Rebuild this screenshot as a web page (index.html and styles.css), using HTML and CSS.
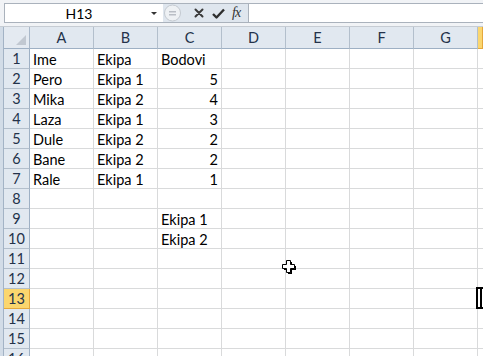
FILE: index.html
```html
<!DOCTYPE html>
<html>
<head>
<meta charset="utf-8">
<link rel="stylesheet" href="styles.css">
</head>
<body>
<div class="app">
  <div class="fbar">
    <div class="namebox"><span class="nb-text">H13</span><span class="nb-arrow"></span></div>
    <div class="fb-buttons">
      <svg class="grip" width="17" height="20" viewBox="0 0 17 20">
        <circle cx="8.5" cy="10" r="8" fill="#eef1f4" stroke="#c3c9d0"/>
        <rect x="5" y="8" width="7" height="1.5" fill="#b9bec5"/>
        <rect x="5" y="11" width="7" height="1.5" fill="#b9bec5"/>
      </svg>
      <svg class="ico ico-x" width="10" height="10" viewBox="0 0 10 10">
        <path d="M1.5 1.5 L8.5 8.5 M8.5 1.5 L1.5 8.5" stroke="#3a3a3a" stroke-width="2" stroke-linecap="round"/>
      </svg>
      <svg class="ico ico-check" width="13" height="11" viewBox="0 0 13 11">
        <path d="M1 6 L4.5 9.5 L12 1.5" fill="none" stroke="#2e2e2e" stroke-width="2.4" stroke-linejoin="round"/>
      </svg>
      <span class="fx">fx</span>
    </div>
    <div class="finput"></div>
  </div>

  <div class="sheet">
    <div class="row hdr">
      <div class="corner"><svg width="12" height="12" viewBox="0 0 12 12"><path d="M11 1 L11 11 L1 11 Z" fill="#c1c8d1"/></svg></div>
      <div class="ch">A</div><div class="ch">B</div><div class="ch">C</div><div class="ch">D</div><div class="ch">E</div><div class="ch">F</div><div class="ch">G</div><div class="ch sel"><span class="ch-wide">H</span></div>
    </div>
    <div class="row"><div class="rh">1</div><div class="cell">Ime</div><div class="cell">Ekipa</div><div class="cell">Bodovi</div><div class="cell"></div><div class="cell"></div><div class="cell"></div><div class="cell"></div><div class="cell"></div></div>
    <div class="row"><div class="rh">2</div><div class="cell">Pero</div><div class="cell">Ekipa 1</div><div class="cell num">5</div><div class="cell"></div><div class="cell"></div><div class="cell"></div><div class="cell"></div><div class="cell"></div></div>
    <div class="row"><div class="rh">3</div><div class="cell">Mika</div><div class="cell">Ekipa 2</div><div class="cell num">4</div><div class="cell"></div><div class="cell"></div><div class="cell"></div><div class="cell"></div><div class="cell"></div></div>
    <div class="row"><div class="rh">4</div><div class="cell">Laza</div><div class="cell">Ekipa 1</div><div class="cell num">3</div><div class="cell"></div><div class="cell"></div><div class="cell"></div><div class="cell"></div><div class="cell"></div></div>
    <div class="row"><div class="rh">5</div><div class="cell">Dule</div><div class="cell">Ekipa 2</div><div class="cell num">2</div><div class="cell"></div><div class="cell"></div><div class="cell"></div><div class="cell"></div><div class="cell"></div></div>
    <div class="row"><div class="rh">6</div><div class="cell">Bane</div><div class="cell">Ekipa 2</div><div class="cell num">2</div><div class="cell"></div><div class="cell"></div><div class="cell"></div><div class="cell"></div><div class="cell"></div></div>
    <div class="row"><div class="rh">7</div><div class="cell">Rale</div><div class="cell">Ekipa 1</div><div class="cell num">1</div><div class="cell"></div><div class="cell"></div><div class="cell"></div><div class="cell"></div><div class="cell"></div></div>
    <div class="row"><div class="rh">8</div><div class="cell"></div><div class="cell"></div><div class="cell"></div><div class="cell"></div><div class="cell"></div><div class="cell"></div><div class="cell"></div><div class="cell"></div></div>
    <div class="row"><div class="rh">9</div><div class="cell"></div><div class="cell"></div><div class="cell">Ekipa 1</div><div class="cell"></div><div class="cell"></div><div class="cell"></div><div class="cell"></div><div class="cell"></div></div>
    <div class="row"><div class="rh">10</div><div class="cell"></div><div class="cell"></div><div class="cell">Ekipa 2</div><div class="cell"></div><div class="cell"></div><div class="cell"></div><div class="cell"></div><div class="cell"></div></div>
    <div class="row"><div class="rh">11</div><div class="cell"></div><div class="cell"></div><div class="cell"></div><div class="cell"></div><div class="cell"></div><div class="cell"></div><div class="cell"></div><div class="cell"></div></div>
    <div class="row"><div class="rh">12</div><div class="cell"></div><div class="cell"></div><div class="cell"></div><div class="cell"></div><div class="cell"></div><div class="cell"></div><div class="cell"></div><div class="cell"></div></div>
    <div class="row"><div class="rh sel">13</div><div class="cell"></div><div class="cell"></div><div class="cell"></div><div class="cell"></div><div class="cell"></div><div class="cell"></div><div class="cell"></div><div class="cell"></div></div>
    <div class="row"><div class="rh">14</div><div class="cell"></div><div class="cell"></div><div class="cell"></div><div class="cell"></div><div class="cell"></div><div class="cell"></div><div class="cell"></div><div class="cell"></div></div>
    <div class="row"><div class="rh">15</div><div class="cell"></div><div class="cell"></div><div class="cell"></div><div class="cell"></div><div class="cell"></div><div class="cell"></div><div class="cell"></div><div class="cell"></div></div>
    <div class="row"><div class="rh">16</div><div class="cell"></div><div class="cell"></div><div class="cell"></div><div class="cell"></div><div class="cell"></div><div class="cell"></div><div class="cell"></div><div class="cell"></div></div>
  </div>

  <div class="selection"><div class="sel-inner"></div></div>

  <svg class="cursor" width="16" height="16" viewBox="0 0 16 16">
    <path d="M6 2 H10 V6 H14 V10 H10 V14 H6 V10 H2 V6 H6 Z" fill="#000" transform="translate(1 1)"/>
    <path d="M5.5 1.5 H9.5 V5.5 H13.5 V9.5 H9.5 V13.5 H5.5 V9.5 H1.5 V5.5 H5.5 Z" fill="#fff" stroke="#000" stroke-width="1"/>
  </svg>
</div>
</body>
</html>
```

FILE: styles.css
```css
html, body {
  margin: 0;
  padding: 0;
}
body {
  width: 483px;
  height: 356px;
  overflow: hidden;
  background: #fff;
  font-family: Lato, "Liberation Sans", sans-serif;
  color: #000;
}
.app {
  position: relative;
  width: 483px;
  height: 356px;
  overflow: hidden;
}

/* formula bar */
.fbar {
  display: flex;
  align-items: flex-start;
  height: 27px;
  box-sizing: border-box;
  padding: 3px 0 0 4px;
  background: #f1f3f6;
  border-bottom: 1px solid #c6ccd3;
}
.namebox {
  width: 159px;
  height: 20px;
  box-sizing: border-box;
  border: 1px solid #aab2bc;
  border-right: none;
  background: #fff;
  display: flex;
  align-items: center;
}
.nb-text {
  flex: 1;
  text-align: center;
  font-size: 14px;
  padding-left: 2px;
}
.nb-arrow {
  width: 0;
  height: 0;
  border-left: 3px solid transparent;
  border-right: 3px solid transparent;
  border-top: 3px solid #333;
  margin-right: 6px;
}
.fb-buttons {
  width: 85px;
  height: 20px;
  box-sizing: border-box;
  background: #dfe6ee;
  border-top: 1px solid #aab2bc;
  border-bottom: 1px solid #aab2bc;
  display: flex;
  align-items: center;
}
.grip {
  margin-left: 1px;
  margin-top: -1px;
}
.ico-x {
  margin-left: 13px;
}
.ico-check {
  margin-left: 8px;
}
.fx {
  margin-left: 7px;
  font-family: "Liberation Serif", serif;
  font-style: italic;
  font-size: 14px;
  color: #333;
  letter-spacing: -1px;
}
.finput {
  flex: 1;
  height: 20px;
  box-sizing: border-box;
  background: #fff;
  border: 1px solid #aab2bc;
  border-right: none;
}

/* sheet */
.sheet {
  padding-left: 4px;
  background: linear-gradient(to right, #d2dce7 0, #d2dce7 3px, #a3b3c5 3px, #a3b3c5 4px, #fff 4px);
}
.row {
  display: grid;
  grid-template-columns: 26px repeat(7, 64px) 1fr;
  height: 20px;
}
.row.hdr {
  height: 22px;
}
.row > div {
  box-sizing: border-box;
  white-space: nowrap;
  overflow: hidden;
}
.cell {
  border-right: 1px solid #d9dadb;
  border-bottom: 1px solid #d9dadb;
  padding: 1px 3px 0;
  font-size: 14.5px;
  line-height: 19px;
}
.num {
  text-align: right;
}
.corner {
  background: #e4eaf1;
  border-right: 1px solid #a9b8c9;
  border-bottom: 1px solid #9eb0c4;
  display: flex;
  align-items: flex-end;
  justify-content: flex-end;
  padding: 0 2px 2px 0;
}
.ch {
  background: #e1e8f0;
  border-right: 1px solid #b3bfcc;
  border-bottom: 1px solid #9eb0c4;
  text-align: center;
  font-size: 14.5px;
  line-height: 22px;
  color: #24324a;
}
.ch-wide {
  display: block;
  width: 64px;
  text-align: center;
}
.rh {
  background: #e1e8f0;
  border-right: 1px solid #9eb0c4;
  border-bottom: 1px solid #b3bfcc;
  text-align: center;
  font-size: 14.5px;
  line-height: 20px;
  color: #24324a;
}
.ch.sel, .rh.sel {
  background: #fbd66e;
  border-color: #e5a83c;
}
.ch.sel {
  text-align: left;
}

/* overlays */
.selection {
  position: absolute;
  left: 476px;
  top: 287px;
  width: 12px;
  height: 22px;
  box-sizing: border-box;
  border: 2px solid #000;
  background: #fff;
}
.sel-inner {
  margin-left: 2px;
  width: 2px;
  height: 100%;
  background: #000;
}
.cursor {
  position: absolute;
  left: 281px;
  top: 259px;
}
```
